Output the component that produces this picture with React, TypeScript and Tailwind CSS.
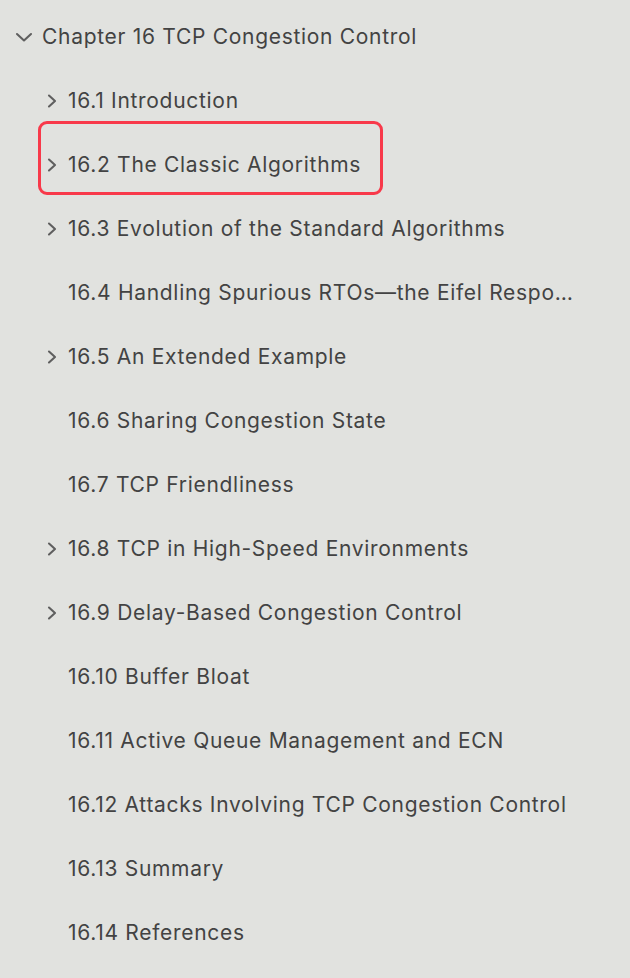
import React from "react";

type Item = { label: string; expandable: boolean; highlighted?: boolean };

const items: Item[] = [
  { label: "16.1 Introduction", expandable: true },
  { label: "16.2 The Classic Algorithms", expandable: true, highlighted: true },
  { label: "16.3 Evolution of the Standard Algorithms", expandable: true },
  { label: "16.4 Handling Spurious RTOs\u2014the Eifel Response Algorithm", expandable: false },
  { label: "16.5 An Extended Example", expandable: true },
  { label: "16.6 Sharing Congestion State", expandable: false },
  { label: "16.7 TCP Friendliness", expandable: false },
  { label: "16.8 TCP in High-Speed Environments", expandable: true },
  { label: "16.9 Delay-Based Congestion Control", expandable: true },
  { label: "16.10 Buffer Bloat", expandable: false },
  { label: "16.11 Active Queue Management and ECN", expandable: false },
  { label: "16.12 Attacks Involving TCP Congestion Control", expandable: false },
  { label: "16.13 Summary", expandable: false },
  { label: "16.14 References", expandable: false },
];

const ChevronRight = () => (
  <svg width="10" height="16" viewBox="0 0 10 16" fill="none">
    <path d="M2 2.5 L8 8 L2 13.5" stroke="#5f5f5f" strokeWidth="2.1" strokeLinecap="round" strokeLinejoin="round" />
  </svg>
);

const ChevronDown = () => (
  <svg width="18" height="10" viewBox="0 0 18 10" fill="none">
    <path d="M2 2 L9 8.5 L16 2" stroke="#5f5f5f" strokeWidth="2.1" strokeLinecap="round" strokeLinejoin="round" />
  </svg>
);

export default function App() {
  return (
    <div
      className="relative w-[630px] h-[978px] bg-[#e1e2df] text-[#434343] overflow-hidden pt-[5px]"
      style={{ fontFamily: "Inter, 'Noto Sans', sans-serif" }}
    >
      <div className="h-16 flex items-center text-[21px] tracking-[0.7px]">
        <div className="w-[42px] flex justify-end pr-[9px]">
          <ChevronDown />
        </div>
        <span>Chapter 16 TCP Congestion Control</span>
      </div>
      {items.map((it) => (
        <div key={it.label} className="h-16 flex items-center text-[21px] tracking-[0.7px]">
          <div className="w-[68px] shrink-0 flex justify-end pr-[11px]">
            {it.expandable && <ChevronRight />}
          </div>
          <span className="truncate pr-[46px]">{it.label}</span>
          {it.highlighted && (
            <div className="absolute left-[38px] top-[121px] w-[345px] h-[74px] rounded-[9px] border-[3px] border-[#f8394a]" />
          )}
        </div>
      ))}
    </div>
  );
}
